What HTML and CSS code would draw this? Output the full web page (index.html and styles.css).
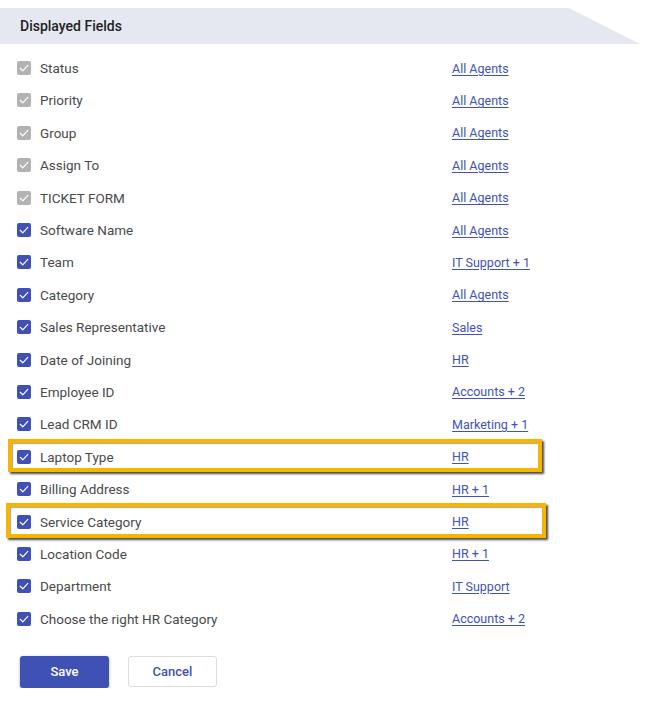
FILE: index.html
```html
<!DOCTYPE html>
<html>
<head>
<meta charset="utf-8">
<link rel="stylesheet" href="styles.css">
</head>
<body>
<div class="panel">
  <div class="header">Displayed Fields</div>
  <ul class="fields">
    <li class="row"><span class="cb disabled"><svg viewBox="0 0 14 14"><path d="M3.2 7.3 L5.8 9.8 L10.8 4.4"/></svg></span><span class="label">Status</span><a class="link" href="#">All Agents</a></li>
    <li class="row"><span class="cb disabled"><svg viewBox="0 0 14 14"><path d="M3.2 7.3 L5.8 9.8 L10.8 4.4"/></svg></span><span class="label">Priority</span><a class="link" href="#">All Agents</a></li>
    <li class="row"><span class="cb disabled"><svg viewBox="0 0 14 14"><path d="M3.2 7.3 L5.8 9.8 L10.8 4.4"/></svg></span><span class="label">Group</span><a class="link" href="#">All Agents</a></li>
    <li class="row"><span class="cb disabled"><svg viewBox="0 0 14 14"><path d="M3.2 7.3 L5.8 9.8 L10.8 4.4"/></svg></span><span class="label">Assign To</span><a class="link" href="#">All Agents</a></li>
    <li class="row"><span class="cb disabled"><svg viewBox="0 0 14 14"><path d="M3.2 7.3 L5.8 9.8 L10.8 4.4"/></svg></span><span class="label">TICKET FORM</span><a class="link" href="#">All Agents</a></li>
    <li class="row"><span class="cb"><svg viewBox="0 0 14 14"><path d="M3.2 7.3 L5.8 9.8 L10.8 4.4"/></svg></span><span class="label">Software Name</span><a class="link" href="#">All Agents</a></li>
    <li class="row"><span class="cb"><svg viewBox="0 0 14 14"><path d="M3.2 7.3 L5.8 9.8 L10.8 4.4"/></svg></span><span class="label">Team</span><a class="link" href="#">IT Support + 1</a></li>
    <li class="row"><span class="cb"><svg viewBox="0 0 14 14"><path d="M3.2 7.3 L5.8 9.8 L10.8 4.4"/></svg></span><span class="label">Category</span><a class="link" href="#">All Agents</a></li>
    <li class="row"><span class="cb"><svg viewBox="0 0 14 14"><path d="M3.2 7.3 L5.8 9.8 L10.8 4.4"/></svg></span><span class="label">Sales Representative</span><a class="link" href="#">Sales</a></li>
    <li class="row"><span class="cb"><svg viewBox="0 0 14 14"><path d="M3.2 7.3 L5.8 9.8 L10.8 4.4"/></svg></span><span class="label">Date of Joining</span><a class="link" href="#">HR</a></li>
    <li class="row"><span class="cb"><svg viewBox="0 0 14 14"><path d="M3.2 7.3 L5.8 9.8 L10.8 4.4"/></svg></span><span class="label">Employee ID</span><a class="link" href="#">Accounts + 2</a></li>
    <li class="row"><span class="cb"><svg viewBox="0 0 14 14"><path d="M3.2 7.3 L5.8 9.8 L10.8 4.4"/></svg></span><span class="label">Lead CRM ID</span><a class="link" href="#">Marketing + 1</a></li>
    <li class="row highlight hl-a"><span class="cb"><svg viewBox="0 0 14 14"><path d="M3.2 7.3 L5.8 9.8 L10.8 4.4"/></svg></span><span class="label">Laptop Type</span><a class="link" href="#">HR</a></li>
    <li class="row"><span class="cb"><svg viewBox="0 0 14 14"><path d="M3.2 7.3 L5.8 9.8 L10.8 4.4"/></svg></span><span class="label">Billing Address</span><a class="link" href="#">HR + 1</a></li>
    <li class="row highlight hl-b"><span class="cb"><svg viewBox="0 0 14 14"><path d="M3.2 7.3 L5.8 9.8 L10.8 4.4"/></svg></span><span class="label">Service Category</span><a class="link" href="#">HR</a></li>
    <li class="row"><span class="cb"><svg viewBox="0 0 14 14"><path d="M3.2 7.3 L5.8 9.8 L10.8 4.4"/></svg></span><span class="label">Location Code</span><a class="link" href="#">HR + 1</a></li>
    <li class="row"><span class="cb"><svg viewBox="0 0 14 14"><path d="M3.2 7.3 L5.8 9.8 L10.8 4.4"/></svg></span><span class="label">Department</span><a class="link" href="#">IT Support</a></li>
    <li class="row"><span class="cb"><svg viewBox="0 0 14 14"><path d="M3.2 7.3 L5.8 9.8 L10.8 4.4"/></svg></span><span class="label">Choose the right HR Category</span><a class="link" href="#">Accounts + 2</a></li>
  </ul>
  <div class="actions">
    <button class="btn btn-primary">Save</button>
    <button class="btn btn-secondary">Cancel</button>
  </div>
</div>
</body>
</html>
```

FILE: styles.css
```css
html, body {
  margin: 0;
  padding: 0;
  background: #ffffff;
}
body {
  font-family: Roboto, "Liberation Sans", Arial, sans-serif;
  color: #444444;
}
.panel {
  padding-top: 8px;
}
.header {
  width: 640px;
  height: 36px;
  background: #e5e8f1;
  clip-path: polygon(0 0, 569px 0, 640px 100%, 0 100%);
  box-sizing: border-box;
  padding-left: 20px;
  display: flex;
  align-items: center;
  font-size: 14px;
  font-weight: 500;
  color: #222222;
}
.fields {
  list-style: none;
  margin: 0;
  padding: 7.9px 0 0 0;
}
.row {
  position: relative;
  height: 32.4px;
  display: flex;
  align-items: center;
  padding-left: 17px;
  font-size: 13.5px;
}
.cb {
  width: 14px;
  height: 14px;
  border-radius: 2px;
  background: #3f51b5;
  display: flex;
  align-items: center;
  justify-content: center;
  flex-shrink: 0;
}
.cb.disabled {
  background: #b3b3b3;
}
.cb svg {
  width: 14px;
  height: 14px;
}
.cb path {
  fill: none;
  stroke: #ffffff;
  stroke-width: 1.2;
  stroke-linecap: round;
  stroke-linejoin: round;
}
.label {
  margin-left: 9px;
  width: 412px;
  color: #4a4a4a;
}
.link {
  color: #4152b8;
  text-decoration: underline;
  font-size: 12.5px;
  text-underline-offset: 2px;
}
.highlight::after {
  content: "";
  position: absolute;
  border: 4px solid #f7b500;
  box-shadow: 2px 2px 2px rgba(30, 30, 30, 0.8), inset 1px 1px 1px rgba(30, 30, 30, 0.4);
  pointer-events: none;
  box-sizing: border-box;
}
.hl-a::after {
  left: 8px;
  width: 534px;
  top: -1.7px;
  height: 33px;
}
.hl-b::after {
  left: 6px;
  width: 540px;
  top: -2.5px;
  height: 35px;
}
.actions {
  display: flex;
  gap: 19px;
  padding-left: 20px;
  margin-top: 20.9px;
}
.btn {
  width: 89px;
  height: 32px;
  border-radius: 3px;
  font-family: Roboto, "Liberation Sans", Arial, sans-serif;
  font-size: 13px;
  font-weight: 500;
  cursor: pointer;
}
.btn-primary {
  background: #3f51b5;
  color: #ffffff;
  border: none;
  box-shadow: 0 1px 3px rgba(0, 0, 0, 0.35);
}
.btn-secondary {
  background: #ffffff;
  color: #3f51b5;
  border: 1px solid #dcdcdc;
  height: 31px;
}
```
